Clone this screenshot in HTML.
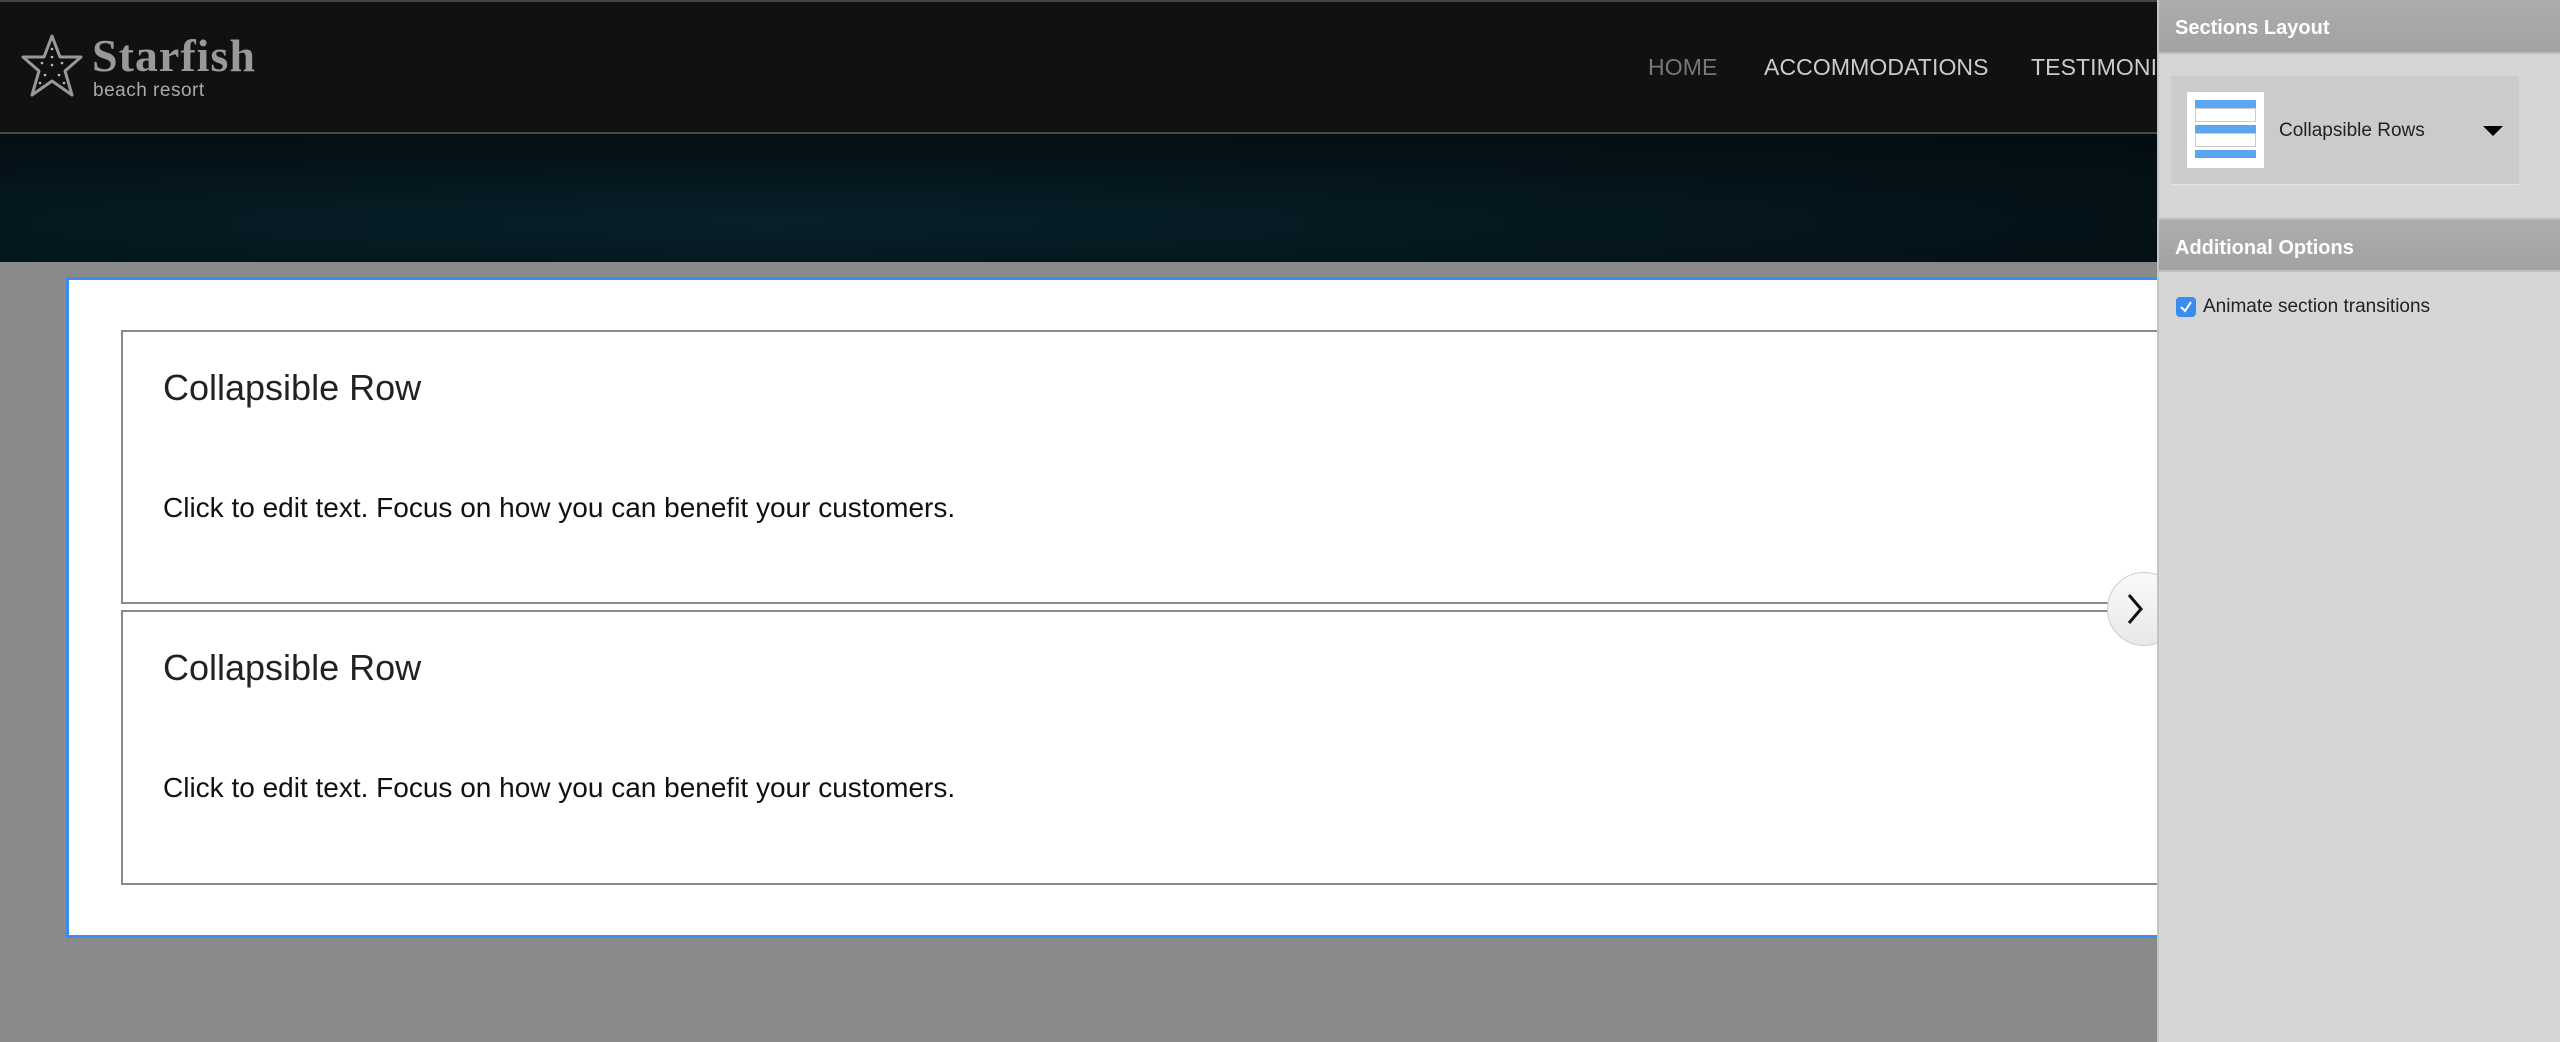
<!DOCTYPE html>
<html><head><meta charset="utf-8"><style>
*{margin:0;padding:0;box-sizing:border-box}
body{width:2560px;height:1042px;overflow:hidden;background:#8a8a8a;position:relative;font-family:"Liberation Sans",sans-serif}
.hdr{position:absolute;left:0;top:0;width:2560px;height:134px;background:#111;border-top:2px solid #444;border-bottom:2px solid #4a4a4a}
.hero{position:absolute;left:0;top:134px;width:2560px;height:128px;background:radial-gradient(ellipse at 30% 70%,#07202a 0%,#041319 50%,#020b10 100%)}
.nav{position:absolute;top:52px;font-size:23px;color:#ccc;letter-spacing:0.1px}
.box{position:absolute;left:66px;top:277px;width:2100px;height:661px;background:#fff;border:3px solid #3b8ded}
.row{position:absolute;left:52px;width:2100px;border:2px solid #8a8a8a;background:#fff}
.row h2{position:absolute;left:40px;font-weight:300;font-size:36px;color:#222}
.row p{position:absolute;left:40px;font-size:28px;color:#111}
.panel{position:absolute;left:2157px;top:0;width:403px;height:1042px;background:#d6d6d6;border-left:2px solid #c4c4c4}
.ph{position:absolute;left:0;width:403px;height:54px;background:linear-gradient(#adadad,#a2a2a2);color:#fff;font-weight:bold;font-size:20px;padding:17px 0 0 16px;border-bottom:2px solid #bdbdbd}
</style></head><body>
<div class="hdr">
<svg style="position:absolute;left:20px;top:31px" width="64" height="68" viewBox="0 0 64 68"><path d="M32 3 L40 24 L61 24 L45 38 L52 62 L32 48 L12 62 L19 38 L3 24 L24 24 Z" fill="none" stroke="#999" stroke-width="3" stroke-linejoin="round"/><g fill="#bbb"><circle cx="32" cy="16" r="1.3"/><circle cx="32" cy="24" r="1.3"/><circle cx="32" cy="32" r="1.3"/><circle cx="22" cy="30" r="1.3"/><circle cx="42" cy="30" r="1.3"/><circle cx="25" cy="42" r="1.3"/><circle cx="39" cy="42" r="1.3"/><circle cx="20" cy="50" r="1.3"/><circle cx="44" cy="50" r="1.3"/></g></svg>
<div style="position:absolute;left:92px;top:27px;font-family:'Liberation Serif',serif;font-weight:bold;font-size:46px;color:#999;letter-spacing:1px">Starfish</div>
<div style="position:absolute;left:93px;top:78px;font-size:19px;color:#aaa;letter-spacing:0.5px">beach resort</div>
<div class="nav" style="left:1648px;color:#777">HOME</div>
<div class="nav" style="left:1764px">ACCOMMODATIONS</div>
<div class="nav" style="left:2031px">TESTIMONIALS</div>
</div>
<div class="hero"></div>
<div class="box">
<div class="row" style="top:50px;height:274px"><h2 style="top:35px">Collapsible Row</h2><p style="top:160px">Click to edit text. Focus on how you can benefit your customers.</p></div>
<div class="row" style="top:330px;height:275px"><h2 style="top:35px">Collapsible Row</h2><p style="top:160px">Click to edit text. Focus on how you can benefit your customers.</p></div>
</div>
<div style="position:absolute;left:2107px;top:572px;width:74px;height:74px;border-radius:50%;background:linear-gradient(#fafafa,#e8e8e8);border:1px solid #ccc"></div>
<svg style="position:absolute;left:2125px;top:592px" width="20" height="34" viewBox="0 0 20 34"><path d="M4 3 L16 17 L4 31" fill="none" stroke="#111" stroke-width="3"/></svg>
<div class="panel">
<div class="ph" style="top:0">Sections Layout</div>
<div style="position:absolute;left:12px;top:76px;width:348px;height:109px;background:#cbcbcb;border-bottom:1px solid #e4e4e4"></div>
<div style="position:absolute;left:28px;top:92px;width:77px;height:76px;background:#fff">
<div style="position:absolute;left:8px;top:8px;width:61px;height:8px;background:#5aa6f0"></div>
<div style="position:absolute;left:8px;top:16px;width:61px;height:14px;border:1px solid #ccc"></div>
<div style="position:absolute;left:8px;top:33px;width:61px;height:8px;background:#5aa6f0"></div>
<div style="position:absolute;left:8px;top:41px;width:61px;height:14px;border:1px solid #ccc"></div>
<div style="position:absolute;left:8px;top:58px;width:61px;height:8px;background:#5aa6f0"></div>
</div>
<div style="position:absolute;left:120px;top:120px;font-size:19px;color:#222">Collapsible Rows</div>
<div style="position:absolute;left:324px;top:126px;width:0;height:0;border-left:10px solid transparent;border-right:10px solid transparent;border-top:10px solid #000"></div>
<div class="ph" style="top:218px;border-top:2px solid #bdbdbd">Additional Options</div>
<div style="position:absolute;left:17px;top:297px;width:20px;height:20px;border-radius:4px;background:#3b8ded"><svg width="20" height="20"><path d="M5 10 L9 14 L15 5" fill="none" stroke="#fff" stroke-width="2"/></svg></div>
<div style="position:absolute;left:44px;top:296px;font-size:19px;color:#222">Animate section transitions</div>
</div>
</body></html>
